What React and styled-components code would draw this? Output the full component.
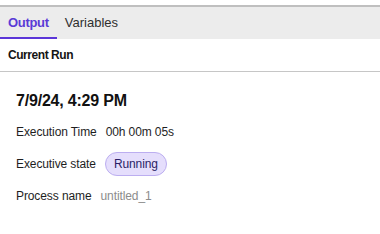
import React from "react";
import styled, { createGlobalStyle } from "styled-components";

const Global = createGlobalStyle`
  html, body { margin: 0; padding: 0; background: #ffffff; }
  body { font-family: "Liberation Sans", Arial, sans-serif; color: #1c1c1c; }
`;

const Page = styled.div`
  width: 380px;
  height: 234px;
  padding-top: 5px;
  box-sizing: border-box;
  display: flex;
  flex-direction: column;
`;

const TabBar = styled.div`
  display: flex;
  height: 34px;
  box-sizing: border-box;
  background: #ececec;
  border-top: 2px solid #bfbfbf;
`;

const Tab = styled.div`
  display: flex;
  align-items: center;
  padding: 0 8px;
  font-size: 13px;
  font-weight: ${(p) => (p.$active ? 600 : 400)};
  color: ${(p) => (p.$active ? "#5a3bd6" : "#2f2f2f")};
  border-bottom: 2px solid ${(p) => (p.$active ? "#5b36d8" : "transparent")};
  letter-spacing: ${(p) => (p.$active ? "-0.3px" : "0")};
`;

const SectionHeader = styled.div`
  height: 33px;
  box-sizing: border-box;
  display: flex;
  align-items: center;
  padding: 0 8px;
  font-size: 12px;
  font-weight: 700;
  letter-spacing: -0.45px;
  color: #141414;
  border-bottom: 1px solid #c6c6c6;
`;

const Content = styled.div`
  display: flex;
  flex-direction: column;
  gap: 8px;
  padding: 19px 16px 0;
`;

const Title = styled.div`
  font-size: 16px;
  line-height: 20px;
  font-weight: 700;
  letter-spacing: -0.2px;
  color: #111;
  margin-bottom: 1px;
`;

const Row = styled.div`
  display: flex;
  align-items: center;
  gap: 9px;
  height: 24px;
  font-size: 12px;
  letter-spacing: -0.1px;
`;

const Label = styled.span`
  color: #1e1e1e;
`;

const Value = styled.span`
  color: ${(p) => (p.$muted ? "#8c8c8c" : "#1e1e1e")};
`;

const Pill = styled.span`
  display: inline-flex;
  align-items: center;
  height: 24px;
  box-sizing: border-box;
  padding: 0 8px;
  border-radius: 12px;
  background: #e5defc;
  border: 1px solid #bcaef0;
  color: #2b1f66;
  font-size: 12px;
`;

export default function App() {
  return (
    <>
      <Global />
      <Page>
        <TabBar>
          <Tab $active>Output</Tab>
          <Tab>Variables</Tab>
        </TabBar>
        <SectionHeader>Current Run</SectionHeader>
        <Content>
          <Title>7/9/24, 4:29 PM</Title>
          <Row>
            <Label>Execution Time</Label>
            <Value>00h 00m 05s</Value>
          </Row>
          <Row>
            <Label>Executive state</Label>
            <Pill>Running</Pill>
          </Row>
          <Row>
            <Label>Process name</Label>
            <Value $muted>untitled_1</Value>
          </Row>
        </Content>
      </Page>
    </>
  );
}
